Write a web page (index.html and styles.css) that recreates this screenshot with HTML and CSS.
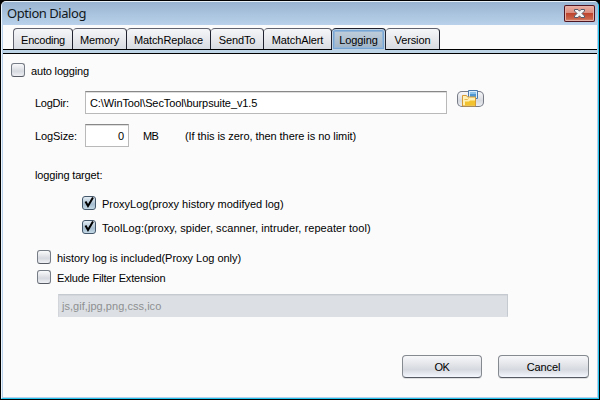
FILE: index.html
```
<!DOCTYPE html>
<html lang="en">
<head>
<meta charset="utf-8">
<title>Option Dialog</title>
<link rel="stylesheet" href="styles.css">
</head>
<body>
<div class="window">
<div class="frame">
  <header class="titlebar">
    <h1 class="title">Option Dialog</h1>
    <button class="close" aria-label="Close"><svg width="31" height="17" viewBox="0 0 31 17"><path d="M10.5 4.500h3.500l1.500 1.700 1.500-1.700h3.500v1.500l-2.500 2.500 2.500 2.500v1.500h-3.500l-1.500-1.700-1.500 1.700h-3.500v-1.500l2.500-2.500-2.500-2.500z" fill="#f4f5f6" stroke="#575a68"/></svg></button>
  </header>
  <nav class="tabs">
    <button class="tab t1"><span>Encoding</span></button>
    <button class="tab t2"><span>Memory</span></button>
    <button class="tab t3"><span>MatchReplace</span></button>
    <button class="tab t4"><span>SendTo</span></button>
    <button class="tab t5"><span>MatchAlert</span></button>
    <button class="tab t6 selected"><span>Logging</span></button>
    <button class="tab t7"><span>Version</span></button>
  </nav>
  <div class="strip"></div>
  <main class="panel">
    <label class="check auto"><i class="box"></i><span class="s-auto">auto logging</span></label>
    <div class="row dir"><span class="name s-dir">LogDir:</span><div class="field path"><span class="s-path">C:\WinTool\SecTool\burpsuite_v1.5</span></div>
      <button class="browse" aria-label="Browse"><svg width="27" height="18" viewBox="0 0 27 18"><path d="M11.500.500h9v8h-9z" fill="#d9ecfb" stroke="#4978ad"/><path d="M13 2h6v5h-6z" fill="#4e97d2"/><path d="M13 2h6v2h-6z" fill="#8cc3ea"/><path d="M5.500 16v-10.500h4l1 1.500h8v9z" fill="#fff0b3" stroke="#d79b35"/><path d="M8 15.500v-4h4l1-1h5v5z" fill="#f2c32f"/><path d="M7.500 9.500h3l1-1" fill="none" stroke="#e6b750"/></svg></button>
    </div>
    <div class="row size"><span class="name s-size">LogSize:</span><div class="field number">0</div><span class="unit s-mb">MB</span><span class="s-hint">(If this is zero, then there is no limit)</span></div>
    <div class="target"><span class="s-target">logging target:</span></div>
    <label class="check proxy"><i class="box on"><svg width="14" height="14" viewBox="0 0 14 14"><path d="M3.500 5.500l2.500 4.500 5-8.500" fill="none" stroke="#000" stroke-width="2"/></svg></i><span class="s-proxy">ProxyLog(proxy history modifyed log)</span></label>
    <label class="check tool"><i class="box on"><svg width="14" height="14" viewBox="0 0 14 14"><path d="M3.500 5.500l2.500 4.500 5-8.500" fill="none" stroke="#000" stroke-width="2"/></svg></i><span class="s-tool">ToolLog:(proxy, spider, scanner, intruder, repeater tool)</span></label>
    <label class="check history"><i class="box"></i><span class="s-history">history log is included(Proxy Log only)</span></label>
    <label class="check exclude"><i class="box"></i><span class="s-exclude">Exlude Filter Extension</span></label>
    <div class="field disabled"><span class="s-ext">js,gif,jpg,png,css,ico</span></div>
    <footer class="actions"><button class="action ok"><span>OK</span></button><button class="action cancel"><span>Cancel</span></button></footer>
  </main>
</div>
</div>
</body>
</html>
```
FILE: styles.css
```
* { box-sizing: border-box; }
body { margin: 0; background: #000; font: 11px/14px "Liberation Sans", Arial, sans-serif; color: #000; }
button { margin: 0; padding: 0; border: 0; font: inherit; color: inherit; }
svg { display: block; }
span { white-space: nowrap; }
.window { width: 600px; height: 400px; padding: 1px; background: #000; border-radius: 6px 6px 0 0; }
.frame { width: 598px; height: 398px; border: 1px solid #24c5ee; border-top-color: #e7eff7; border-left-color: #edf5fc; border-radius: 5px 5px 0 0; background: #b9d1ea; overflow: hidden; padding: 0 1px 1px; }
.titlebar { display: flex; justify-content: space-between; height: 23px; margin: 0 -1px; padding: 3px 3px 0 5px; background: linear-gradient(#99b4d1, #b9d1ea); }
.title { margin: 0; font: 13px/17px "Noto Sans", sans-serif; letter-spacing: -0.45px; color: #111820; }
.close { width: 31px; height: 17px; border-radius: 2px; background: linear-gradient(#e9a99c 0 2px, #d98d7f 46%, #bd422b 48%, #c9634a 80%, #e09b83); box-shadow: inset 0 0 0 1px #4d1622, inset 0 0 0 2px #e5b0a5; }
.tabs { display: flex; height: 24px; padding: 3px 0 0 10px; background: #fbfbfb; }
.tab { height: 21px; padding: 1px 0 0; border: solid #60636e; border-width: 1px 1px 0 0; border-right-color: #20222f; border-radius: 4px 4px 0 0; background: linear-gradient(#f5f6f8, #d8dbe1); line-height: 14px; letter-spacing: -0.1px; }
.t1 { width: 60px; border-left-width: 1px; letter-spacing: -0.25px; }
.t2 { width: 54px; }
.t3 { width: 84px; }
.t4 { width: 53px; }
.t5 { width: 68px; }
.t6 { width: 54px; }
.t7 { width: 54px; }
.tab.selected { position: relative; height: 22px; padding-top: 0; background: linear-gradient(#c3d0dc, #9db2c5); border-color: #20222f; box-shadow: inset 0 0 0 1px #c1d3e3, inset 0 0 0 2px #77a5d4, inset 0 0 0 3px #93b5d8; }
.strip { height: 5px; border: solid #000; border-width: 1px 0; background: #bdd3e6; }
.panel { height: 343px; background: #fbfbfb; padding-top: 9px; }
.check { display: flex; align-items: flex-start; height: 14px; }
.check > span { margin-left: 6px; padding-top: 1px; }
.box { width: 14px; height: 14px; border: 1px solid #777d86; border-bottom-color: #555a63; border-radius: 3px; background: linear-gradient(#f9fafb, #d6d9df 60%, #eef0f5); }
.box.on { border-color: #44576b; background: linear-gradient(#e4edf5, #a6bdcf 60%, #c4dae8); }
.box svg { margin: -1px; overflow: visible; }
.auto { margin-left: 8px; }
.row { display: flex; margin-left: 32px; height: 23px; }
.dir { margin-top: 14px; }
.size { margin-top: 10px; line-height: 24px; }
.name { width: 50px; line-height: 24px; }
.field { height: 23px; border: 1px solid #b9b9b9; border-top: 1px solid #888; background: #fff; box-shadow: inset 0 1px #dedede; padding: 0 4px; line-height: 22px; }
.path { width: 362px; }
.browse { display: block; width: 27px; height: 16px; margin: 0 0 0 10px; background: linear-gradient(#fafbfc, #d6d9df 60%, #f0f2f5); border-radius: 5px; box-shadow: inset 0 0 0 1px #777b86; }
.browse svg { margin-top: -1px; }
.number { width: 44px; text-align: right; }
.unit { margin-left: 14px; width: 42px; }
.target { margin: 21px 0 0 32px; height: 14px; }
.proxy { margin: 14px 0 0 79px; }
.tool { margin: 10px 0 0 79px; }
.history { margin: 16px 0 0 34px; }
.exclude { margin: 6px 0 0 34px; }
.s-auto { letter-spacing: -0.17px; }
.s-dir { letter-spacing: -0.25px; }
.s-path { letter-spacing: -0.1px; }
.s-size { letter-spacing: -0.1px; }
.s-mb { letter-spacing: -0.6px; }
.s-hint { letter-spacing: -0.06px; }
.s-target { letter-spacing: -0.16px; }
.s-tool { letter-spacing: 0.05px; }
.s-history { letter-spacing: -0.03px; }
.s-exclude { letter-spacing: -0.18px; }
.s-ext { letter-spacing: 0.04px; }
.disabled { width: 450px; margin: 10px 0 0 55px; padding-left: 3px; border-color: #c5cad0; border-left-color: #d2d5da; border-bottom-color: #dce0e4; background: #dce0e4; box-shadow: inset 0 1px #d3d7db; color: #8e8f91; }
.actions { display: flex; gap: 16px; margin: 38px 0 0 399px; }
.action { height: 23px; border: 1px solid #858990; border-bottom-color: #555a63; border-radius: 4px; background: linear-gradient(#f8f8fa, #d6d9df 65%, #f4f7fd); box-shadow: 0 1px #dedfe1; }
.ok { width: 80px; letter-spacing: -0.5px; }
.cancel { width: 91px; letter-spacing: -0.1px; }
```
